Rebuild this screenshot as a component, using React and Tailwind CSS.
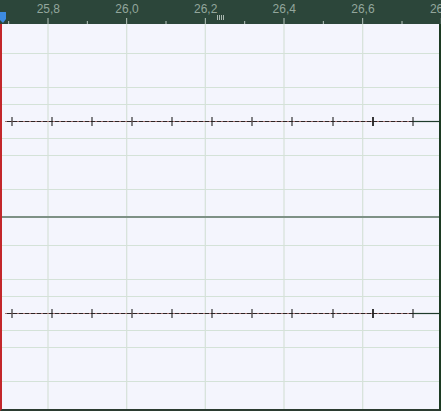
import React from "react";

const STEP = 78.67;
const labels = ["25,8", "26,0", "26,2", "26,4", "26,6", "26,8"];
const majors = [48, 126.7, 205.3, 284, 362.7];
const spikes = [12, 52, 92, 132, 172, 212, 252, 292, 333, 373, 413];

const Ruler = () => (
  <div className="relative h-[24px] bg-[#2c463a] overflow-hidden">
    <div className="flex pl-[9px] pt-[2px]">
      {labels.map((l) => (
        <span
          key={l}
          className="w-[78.67px] shrink-0 text-center text-[12px] leading-[14px] text-[#93a69c]"
          style={{ fontFamily: '"Liberation Sans", Arial, sans-serif' }}
        >
          {l}
        </span>
      ))}
    </div>
    <svg className="absolute left-0 top-0" width="441" height="24">
      {labels.map((_, i) => {
        const x = 48 + i * STEP;
        return (
          <g key={i} stroke="#b9c6bf" strokeWidth="1">
            <line x1={x} y1="18" x2={x} y2="24" />
            <line x1={x - STEP / 2} y1="21" x2={x - STEP / 2} y2="24" />
          </g>
        );
      })}
      <g stroke="#aab8b0" strokeWidth="1">
        <line x1="217.5" y1="15" x2="217.5" y2="20" />
        <line x1="219.5" y1="15" x2="219.5" y2="20" />
        <line x1="221.5" y1="15" x2="221.5" y2="20" />
        <line x1="223.5" y1="15" x2="223.5" y2="20" />
      </g>
      <path d="M0 12 H6 V19 L3 23 L0 20 Z" fill="#3d8be0" />
    </svg>
  </div>
);

const Channel = ({ height, center }) => {
  const hLines = [-68, -34, -17, 17, 34, 68].map((d) => center + d);
  return (
    <div className="shrink-0" style={{ height }}>
      <svg width="437" height={height} className="block">
        {hLines.map((y) => (
          <line key={y} x1="0" y1={y + 0.5} x2="437" y2={y + 0.5} stroke="#d4e2d8" strokeWidth="1.2" />
        ))}
        {majors.map((x) => (
          <line key={x} x1={x - 2} y1="0" x2={x - 2} y2={height} stroke="#d5e1d9" strokeWidth="1.2" />
        ))}
        <line x1="411" y1={center + 0.5} x2="437" y2={center + 0.5} stroke="#1f3b2b" strokeWidth="1.2" />
        <line x1="3" y1={center + 0.5} x2="411" y2={center + 0.5} stroke="#2e2424" strokeWidth="1.2" />
        <line
          x1="3"
          y1={center + 0.5}
          x2="411"
          y2={center + 0.5}
          stroke="#a07070"
          strokeWidth="1"
          strokeDasharray="2 4"
        />
        {spikes.map((x, i) => (
          <path
            key={x}
            d={`M${x - 2} ${center - 4} L${x - 2} ${center + 5}`}
            stroke="#222"
            strokeWidth={i === 9 ? 1.8 : 1.1}
            fill="none"
          />
        ))}
      </svg>
    </div>
  );
};

export default function App() {
  return (
    <div className="w-[441px] h-[411px] flex flex-col overflow-hidden bg-[#f4f5fd]">
      <Ruler />
      <div className="flex-1 flex flex-col border-l-2 border-l-[#c3262b] border-r-2 border-r-[#1c3a22] border-b-2 border-b-[#2b3b30] overflow-hidden">
        <Channel height={192} center={97} />
        <div className="h-[2px] shrink-0 bg-[#7e9186]" />
        <Channel height={191} center={95} />
      </div>
    </div>
  );
}
